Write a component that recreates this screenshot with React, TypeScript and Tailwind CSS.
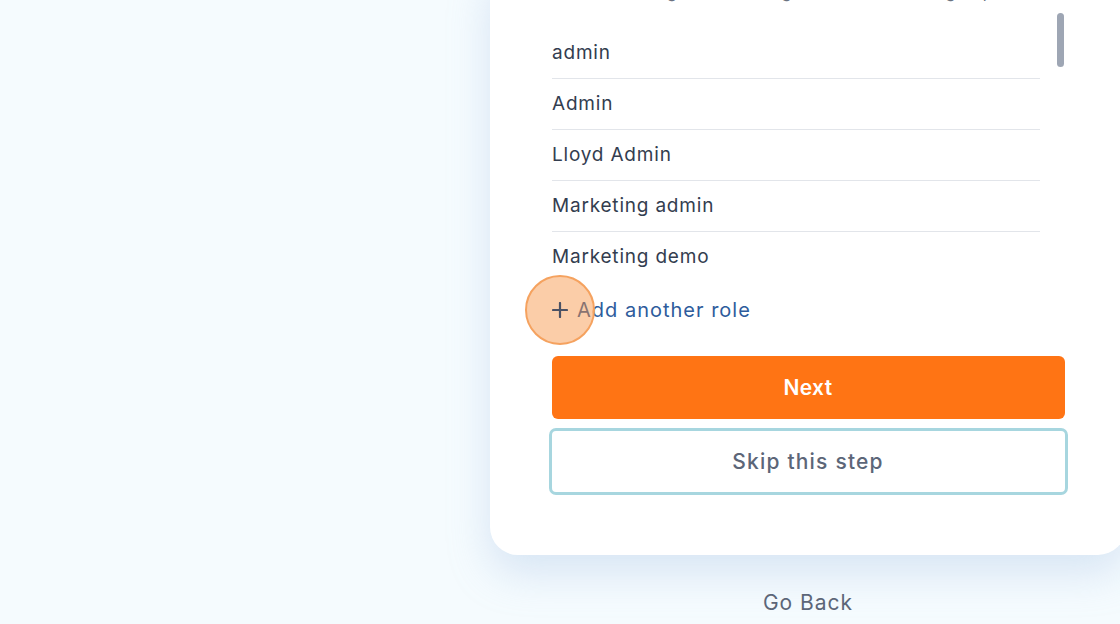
const roles = ["admin", "Admin", "Lloyd Admin", "Marketing admin", "Marketing demo"];

export default function App() {
  return (
    <div
      className="h-[624px] w-[1120px] overflow-hidden bg-[#f5fbfe] text-[#333d4f]"
      style={{ fontFamily: "Inter, 'Noto Sans', sans-serif" }}
    >
      <div className="flex">
        <div className="w-[490px] shrink-0" />
        <div className="flex w-[636px] shrink-0 flex-col items-center">
          {/* Card */}
          <div className="-mt-[40px] w-full rounded-[28px] bg-white px-[62px] pb-[60px] pt-[20px] shadow-[0_18px_40px_rgba(160,190,225,0.35)]">
            <p className="h-[24px] text-[16px] leading-[24px] tracking-[0.6px] text-[#6b7280]">
              (Select existing roles or assign new ones to this group)
            </p>

            {/* Role list */}
            <div className="relative mt-[8px] pt-[16px]">
              <ul className="w-[488px]">
                {roles.map((role, i) => (
                  <li
                    key={role}
                    className={`flex h-[51px] items-center text-[19px] tracking-[0.8px] ${
                      i < roles.length - 1 ? "border-b border-[#e2e5ea]" : ""
                    }`}
                  >
                    {role}
                  </li>
                ))}
              </ul>
              <div className="absolute right-0 top-[1px] h-[54px] w-[7px] rounded-full bg-[#9ea6b4]" />
            </div>

            {/* Add another role */}
            <div className="relative mt-[10px] flex h-[34px] items-center gap-[9px] text-[20px] tracking-[1px] text-[#2e5c9c]">
              <svg className="relative z-10" width="16" height="16" viewBox="0 0 16 16" fill="none">
                <path d="M8 1v14M1 8h14" stroke="#4a5164" strokeWidth="2.2" strokeLinecap="round" />
              </svg>
              <span>Add another role</span>
              <div className="absolute -left-[27px] top-[-18px] h-[70px] w-[70px] rounded-full border-2 border-[#f5a25f] bg-[#f7913f]/45" />
            </div>

            {/* Buttons */}
            <div className="mt-[29px] flex flex-col items-center gap-[9px]">
              <button className="h-[63px] w-[513px] rounded-[6px] bg-[#ff7414] text-[21px] font-semibold tracking-[0.3px] text-white">
                Next
              </button>
              <button className="h-[67px] w-[519px] rounded-[7px] border-[3px] border-[#a7d6df] bg-white text-[21px] font-medium tracking-[1.2px] text-[#5c6678]">
                Skip this step
              </button>
            </div>
          </div>

          <button className="mt-[32px] text-[21px] tracking-[1px] text-[#5c6678]">Go Back</button>
        </div>
      </div>
    </div>
  );
}
